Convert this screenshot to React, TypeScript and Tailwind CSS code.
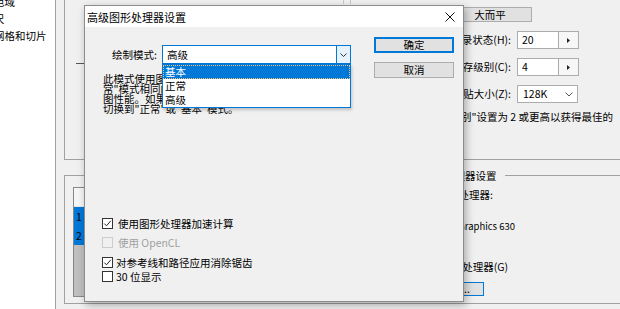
const line = 'bg-[#a0a0a0]';

function Check({ on, disabled }: { on?: boolean; disabled?: boolean }) {
  return (
    <span
      className={`flex h-[11px] w-[11px] shrink-0 items-center justify-center border ${
        disabled ? 'border-[#cccccc] bg-[#f0f0f0]' : 'border-[#333333] bg-white'
      }`}
    >
      {on && (
        <svg width="9" height="9" viewBox="0 0 9 9">
          <path d="M1.3 4.6 L3.5 6.8 L7.8 1.8" fill="none" stroke="#222" strokeWidth="1" />
        </svg>
      )}
    </span>
  );
}

function Sidebar() {
  return (
    <div className="h-full w-[56px] shrink-0 overflow-hidden border-r border-[#a0a0a0] bg-white">
      <div className="-ml-[48px] -mt-[7px] flex flex-col whitespace-nowrap leading-[17px]">
        <span>透明度与色域</span>
        <span>单位与标尺</span>
        <span>参考线、网格和切片</span>
      </div>
    </div>
  );
}

function Background() {
  return (
    <div className="flex-1 pl-[8px]">
      {/* 性能 / 历史记录与高速缓存 */}
      <div className="flex h-[160px] border-b border-l border-[#a0a0a0]">
        <div className="w-[30px] shrink-0">
          <div className="ml-[11px] mt-[63px] h-px w-[8px] bg-[#555555]" />
        </div>
        <div className="flex flex-col">
          <div className="flex h-[4px] gap-[6px] pl-[248px]">
            <div className="w-px bg-[#c8c8c8]" />
            <div className="w-px bg-[#c8c8c8]" />
          </div>
          <div className="mt-[3px] flex gap-[3px] pl-[179px]">
            {['高而窄', '默认', '大而平'].map((b) => (
              <div key={b} className="flex h-[15px] w-[84px] items-center justify-center border border-[#adadad] bg-[#e1e1e1]">
                {b}
              </div>
            ))}
          </div>
          <div className="mt-[9px] flex h-[18px] items-center">
            <span className="w-[416px] text-right whitespace-nowrap">历史记录状态(H):</span>
            <div className="ml-[6px] flex h-[18px]">
              <div className="flex w-[42px] items-center border border-[#acacac] bg-white pl-[4px]">20</div>
              <div className="flex w-[20px] items-center justify-center border border-l-0 border-[#acacac] bg-[#f7f7f7]">
                <svg width="3" height="5" viewBox="0 0 3 5"><path d="M0 0 L3 2.5 L0 5 Z" fill="#222" /></svg>
              </div>
            </div>
          </div>
          <div className="mt-[9px] flex h-[18px] items-center">
            <span className="w-[416px] text-right whitespace-nowrap">高速缓存级别(C):</span>
            <div className="ml-[6px] flex h-[18px]">
              <div className="flex w-[42px] items-center border border-[#acacac] bg-white pl-[4px]">4</div>
              <div className="flex w-[20px] items-center justify-center border border-l-0 border-[#acacac] bg-[#f7f7f7]">
                <svg width="3" height="5" viewBox="0 0 3 5"><path d="M0 0 L3 2.5 L0 5 Z" fill="#222" /></svg>
              </div>
            </div>
          </div>
          <div className="mt-[9px] flex h-[18px] items-center">
            <span className="w-[416px] text-right whitespace-nowrap">高速缓存拼贴大小(Z):</span>
            <div className="ml-[6px] flex h-[18px] w-[61px] items-center justify-between border border-[#acacac] bg-white pl-[5px] pr-[4px]">
              <span>128K</span>
              <svg width="8" height="5" viewBox="0 0 8 5"><path d="M0.5 0.5 L4 4 L7.5 0.5" fill="none" stroke="#555" /></svg>
            </div>
          </div>
          <div className="mt-[7px] w-[518px] text-right whitespace-nowrap">将"高速缓存级别"设置为 2 或更高以获得最佳的</div>
        </div>
      </div>

      {/* 图形处理器设置 */}
      <div className="mt-[15px] flex h-[129px] flex-col border-b border-l border-[#a0a0a0]">
        <div className="-mt-[7px] flex h-[15px] items-center">
          <div className={`h-px w-[354px] shrink-0 ${line}`} />
          <span className="pl-[4px] pr-[8px] whitespace-nowrap">图形处理器设置</span>
          <div className={`h-px flex-1 ${line}`} />
        </div>
        <div className="flex items-start">
          <div className="ml-[8px] mt-[4px] flex h-[110px] w-[200px] shrink-0 flex-col border border-[#828790] bg-[#bfbfbf]">
            <div className="h-[19px] border-b border-[#e5e5e5] bg-[#f5f5f5]" />
            <div className="h-[19px] bg-[#0078d7] pl-[2px] leading-[19px]">1</div>
            <div className="h-[19px] bg-[#0078d7] pl-[2px] leading-[19px]">2</div>
          </div>
          <div className="ml-[107px] flex flex-col">
            <div className="mt-[5px] w-[113px] text-right whitespace-nowrap">检测到的图形处理器:</div>
            <div className="mt-[17px] w-[135px] text-right text-[9.5px] whitespace-nowrap">Intel(R) UHD Graphics 630</div>
            <div className="mt-[27px] w-[128px] text-right whitespace-nowrap">使用图形处理器(G)</div>
            <div className="ml-[25px] mt-[8px] flex h-[14px] w-[79px] items-center justify-center border border-[#0078d7] bg-[#e1e1e1] leading-[12px]">
              高级设置...
            </div>
          </div>
        </div>
      </div>
    </div>
  );
}

function GpuDialog() {
  return (
    <div className="absolute left-[84px] top-[5px] flex h-[297px] w-[380px] flex-col border border-[#8c8c8c] bg-[#f0f0f0] shadow-[2px_3px_8px_rgba(0,0,0,0.3)]">
      <div className="flex h-[21px] items-center justify-between bg-white pl-[2px] pr-[8px] text-[11px]">
        <span>高级图形处理器设置</span>
        <svg width="10" height="10" viewBox="0 0 10 10">
          <path d="M0.5 0.5 L9.5 9.5 M9.5 0.5 L0.5 9.5" stroke="#111" strokeWidth="1" />
        </svg>
      </div>
      <div className="flex flex-1">
        <div className="flex w-[289px] shrink-0 flex-col">
          <div className="mt-[18px] flex h-[19px] items-center">
            <span className="ml-[27px] w-[50px] whitespace-nowrap">绘制模式:</span>
            <div className="relative flex h-[19px] w-[189px] border border-[#0078d7] bg-white">
              <span className="flex-1 pl-[4px] leading-[17px]">高级</span>
              <div className="flex w-[14px] items-center justify-center border-l border-[#0078d7] bg-[#e5f1fb]">
                <svg width="7" height="4" viewBox="0 0 7 4"><path d="M0.5 0.5 L3.5 3.5 L6.5 0.5" fill="none" stroke="#333" /></svg>
              </div>
              <div className="absolute left-[-1px] top-[18px] flex w-[189px] flex-col border border-[#0078d7] bg-white shadow-[1px_2px_3px_rgba(0,0,0,0.2)]">
                <div className="h-[14px] bg-[#0078d7] pl-[2px] leading-[14px] text-white outline-1 outline-dotted -outline-offset-1 outline-[#f0c080]">基本</div>
                <div className="h-[14px] pl-[2px] leading-[14px]">正常</div>
                <div className="h-[14px] pl-[2px] leading-[14px]">高级</div>
              </div>
            </div>
          </div>
          <div className="ml-[18px] mt-[10px] whitespace-nowrap leading-[10px]">
            此模式使用图形处理器的更多功能，提供与"正<br />
            常"模式相同的图形处理器功能，但能提升绘<br />
            图性能。如果遇到问题，请尝试<br />
            切换到"正常"或"基本"模式。
          </div>
          <div className="ml-[17px] mt-[104px] flex flex-col">
            <label className="flex h-[11px] items-center gap-[5px]">
              <Check on />
              <span>使用图形处理器加速计算</span>
            </label>
            <label className="mt-[8px] flex h-[11px] items-center gap-[5px] text-[#a0a0a0]">
              <Check disabled />
              <span>使用 OpenCL</span>
            </label>
            <label className="mt-[9px] flex h-[11px] items-center gap-[3px]">
              <Check on />
              <span>对参考线和路径应用消除锯齿</span>
            </label>
            <label className="mt-[3px] flex h-[11px] items-center gap-[3px]">
              <Check />
              <span>30 位显示</span>
            </label>
          </div>
        </div>
        <div className="flex flex-col pt-[10px]">
          <div className="flex h-[16px] w-[80px] items-center justify-center border border-[#0078d7] bg-[#e1e1e1] shadow-[inset_0_0_0_1px_#0078d7]">确定</div>
          <div className="mt-[9px] flex h-[16px] w-[80px] items-center justify-center border border-[#adadad] bg-[#e1e1e1]">取消</div>
        </div>
      </div>
    </div>
  );
}

export default function App() {
  return (
    <div className="relative flex h-[309px] w-[620px] overflow-hidden bg-[#f0f0f0] font-['Noto_Sans_CJK_SC',sans-serif] text-[10.5px] leading-[14px] text-black">
      <Sidebar />
      <Background />
      <GpuDialog />
    </div>
  );
}
